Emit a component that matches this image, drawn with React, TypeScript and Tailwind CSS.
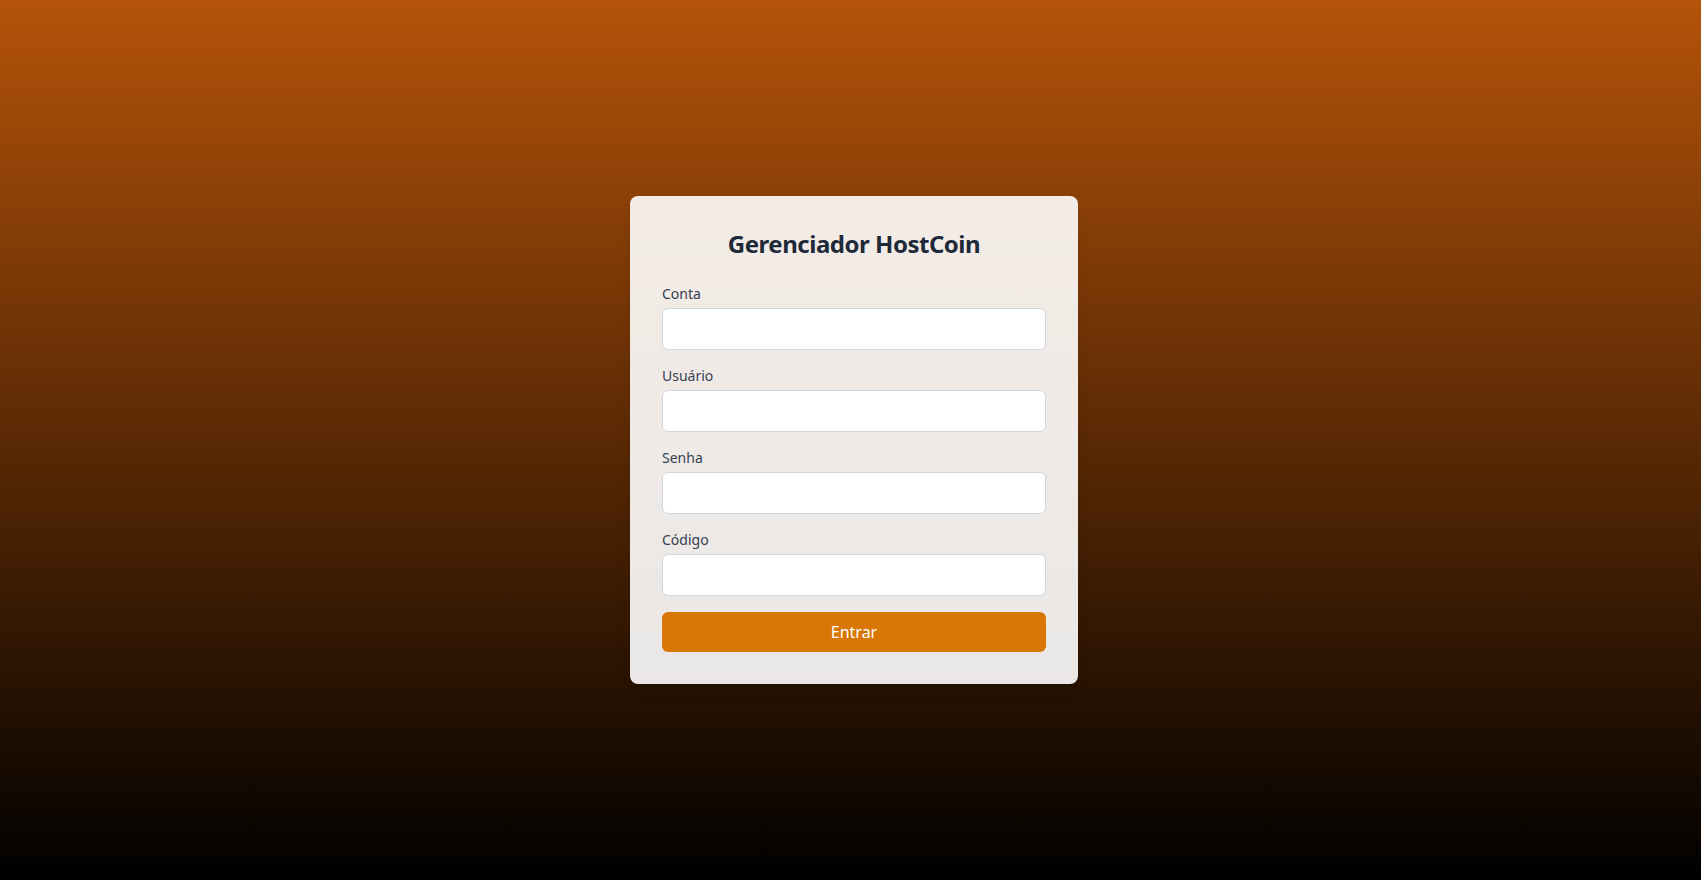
export default function App() {
  const fields = ["Conta", "Usuário", "Senha", "Código"];

  return (
    <div
      className="min-h-screen w-full flex items-center justify-center pl-[7px] bg-[linear-gradient(to_bottom,#b45309,#000000)]"
      style={{ fontFamily: '"Noto Sans", "Open Sans", sans-serif' }}
    >
      <div className="w-full max-w-md bg-white/90 rounded-lg shadow-lg p-8">
        <h1 className="text-2xl font-bold text-center text-gray-800 mb-6 tracking-[-0.02em]">Gerenciador HostCoin</h1>
        <form className="space-y-4" onSubmit={e => e.preventDefault()}>
          {fields.map(f => (
            <div key={f}>
              <label className="block text-sm text-gray-700 mb-1">{f}</label>
              <input
                type={f === "Senha" ? "password" : "text"}
                className="w-full px-3 py-2 text-base bg-white border border-gray-300 rounded-md outline-none"
              />
            </div>
          ))}
          <button type="submit" className="w-full py-2 text-base text-white bg-[#d97706] rounded-md">
            Entrar
          </button>
        </form>
      </div>
    </div>
  );
}
